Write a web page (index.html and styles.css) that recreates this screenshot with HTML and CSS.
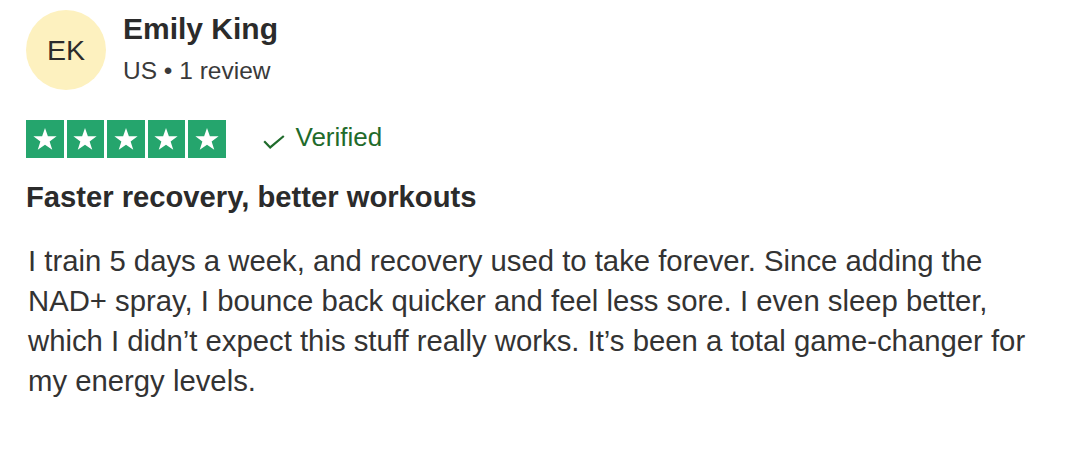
FILE: index.html
```html
<!DOCTYPE html>
<html lang="en">
<head>
<meta charset="utf-8">
<title>Review</title>
<link rel="stylesheet" href="styles.css">
</head>
<body>
<article class="review">
  <header class="author">
    <div class="avatar">EK</div>
    <div class="author-info">
      <div class="name">Emily King</div>
      <div class="meta">US • 1 review</div>
    </div>
  </header>
  <div class="rating-row">
    <div class="stars" aria-label="Rated 5 out of 5">
      <span class="star"><svg viewBox="0 0 24 24"><path d="M12 3.2l2.3 6.6h7l-5.6 4.1 2.1 6.7L12 16.5l-5.8 4.1 2.1-6.7-5.6-4.1h7z"/></svg></span>
      <span class="star"><svg viewBox="0 0 24 24"><path d="M12 3.2l2.3 6.6h7l-5.6 4.1 2.1 6.7L12 16.5l-5.8 4.1 2.1-6.7-5.6-4.1h7z"/></svg></span>
      <span class="star"><svg viewBox="0 0 24 24"><path d="M12 3.2l2.3 6.6h7l-5.6 4.1 2.1 6.7L12 16.5l-5.8 4.1 2.1-6.7-5.6-4.1h7z"/></svg></span>
      <span class="star"><svg viewBox="0 0 24 24"><path d="M12 3.2l2.3 6.6h7l-5.6 4.1 2.1 6.7L12 16.5l-5.8 4.1 2.1-6.7-5.6-4.1h7z"/></svg></span>
      <span class="star"><svg viewBox="0 0 24 24"><path d="M12 3.2l2.3 6.6h7l-5.6 4.1 2.1 6.7L12 16.5l-5.8 4.1 2.1-6.7-5.6-4.1h7z"/></svg></span>
    </div>
    <div class="verified">
      <svg class="check" viewBox="0 0 22 14"><path d="M1.2 6.2l6 6.2L20.8 1"/></svg>
      <span>Verified</span>
    </div>
  </div>
  <h2 class="title">Faster recovery, better workouts</h2>
  <p class="text">I train 5 days a week, and recovery used to take forever. Since adding the NAD+ spray, I bounce back quicker and feel less sore. I even sleep better, which I didn’t expect this stuff really works. It’s been a total game-changer for my energy levels.</p>
</article>
</body>
</html>
```
FILE: styles.css
```css
html, body {
  margin: 0;
  padding: 0;
  background: #ffffff;
}
body {
  font-family: "Liberation Sans", Arial, sans-serif;
  color: #2b2b2b;
}
.review {
  padding: 10px 0 0 26px;
}
.author {
  display: flex;
  align-items: flex-start;
  gap: 17px;
}
.avatar {
  width: 80px;
  height: 80px;
  border-radius: 50%;
  background: #fdf1bf;
  color: #2b2b2b;
  display: flex;
  align-items: center;
  justify-content: center;
  font-size: 28.5px;
  flex: none;
}
.author-info {
  display: flex;
  flex-direction: column;
  padding-top: 2px;
}
.name {
  font-size: 30px;
  font-weight: 700;
  line-height: 34px;
}
.meta {
  font-size: 24.5px;
  line-height: 28px;
  margin-top: 11px;
  color: #3a3a3a;
}
.rating-row {
  display: flex;
  align-items: center;
  gap: 37px;
  margin-top: 30px;
}
.stars {
  display: flex;
  gap: 3px;
}
.star {
  width: 37.5px;
  height: 37.5px;
  background: #25a56d;
  display: flex;
  align-items: center;
  justify-content: center;
}
.star svg {
  width: 30px;
  height: 30px;
  fill: #ffffff;
}
.verified {
  display: flex;
  align-items: center;
  gap: 11px;
  color: #1f6b2b;
  font-size: 26px;
  padding-bottom: 3px;
}
.check {
  width: 22px;
  height: 14px;
  margin-top: 9px;
  fill: none;
  stroke: #1f6b2b;
  stroke-width: 2.2;
}
.title {
  margin: 22px 0 0 0;
  font-size: 29.2px;
  font-weight: 700;
  line-height: 34px;
  color: #2b2b2b;
}
.text {
  margin: 27px 0 0 2px;
  font-size: 29.3px;
  line-height: 40px;
  color: #333333;
  max-width: 1020px;
}
```
